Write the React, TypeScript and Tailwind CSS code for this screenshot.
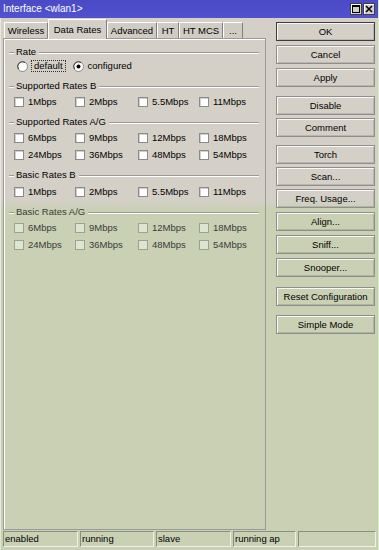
import React from "react";

const Check = ({ disabled }: { disabled?: boolean }) => (
  <span
    className={
      disabled
        ? "inline-block w-[10px] h-[10px] border border-[#9aa392] bg-[#dde4cf] shrink-0"
        : "inline-block w-[10px] h-[10px] border border-[#8a8a8a] bg-white shadow-[inset_1px_1px_0_#d0d0d0] shrink-0"
    }
  />
);

const Radio = ({ on }: { on?: boolean }) => (
  <svg width="11" height="11" viewBox="0 0 11 11" className="shrink-0">
    <circle cx="5.5" cy="5.5" r="5" fill="#fff" stroke="#8a8a8a" strokeWidth="1" />
    <path d="M1.6 8 A4.6 4.6 0 0 1 8 1.6" fill="none" stroke="#404040" strokeWidth="1" />
    {on && <circle cx="5.5" cy="5.5" r="2" fill="#000" />}
  </svg>
);

const GroupLabel = ({ text, mt, muted }: { text: string; mt: string; muted?: boolean }) => (
  <div className={`flex items-center h-[12px] ${mt}`}>
    <span className="w-[5px] border-t border-[#9a9a9a] shadow-[0_1px_0_#fff]" />
    <span className={`px-[2px] leading-none ${muted ? "text-[#3a3a3a]" : ""}`}>{text}</span>
    <span className="flex-1 ml-[1px] border-t border-[#9a9a9a] shadow-[0_1px_0_#fff]" />
  </div>
);

const Row = ({ items, mt, disabled }: { items: string[]; mt: string; disabled?: boolean }) => (
  <div className={`grid grid-cols-[61px_63px_61px_1fr] h-[14px] pl-[5px] ${mt}`}>
    {items.map((t) => (
      <div key={t} className="flex items-center gap-[4px]">
        <Check disabled={disabled} />
        <span className={`leading-none ${disabled ? "text-[#3a3a3a]" : ""}`}>{t}</span>
      </div>
    ))}
  </div>
);

const Btn = ({ label, mt, def }: { label: string; mt: string; def?: boolean }) => (
  <div
    className={`h-[19px] flex items-center justify-center leading-none border ${
      def ? "border-[#3c3c3c]" : "border-[#8e8e8e]"
    } shadow-[inset_1px_1px_0_rgba(255,255,255,0.85),inset_-1px_-1px_0_rgba(0,0,0,0.12)] ${mt}`}
  >
    {label}
  </div>
);

const Tab = ({ label, w, active }: { label: string; w: string; active?: boolean }) => (
  <div
    className={`${w} flex items-center justify-center leading-none border-l border-t border-r ${
      active
        ? "h-[20px] border-l-white border-t-white border-r-[#808080] bg-[#d4d0c8] -mb-[1px] z-10 relative"
        : "h-[16px] border-l-white border-t-white border-r-[#808080] bg-[#d0ccc4]"
    }`}
  >
    {label}
  </div>
);

export default function App() {
  return (
    <div className="w-[379px] h-[550px] flex flex-col font-['Liberation_Sans',Arial,sans-serif] text-[9.5px] text-black bg-[linear-gradient(to_bottom,#d4d0c8_0px,#d4d0c8_200px,#c9d0b4_210px,#c9d0b4_100%)] border-r border-[#d8ecc8] overflow-hidden">
      {/* title bar */}
      <div className="h-[18px] bg-[linear-gradient(to_bottom,#4a4ac6,#5252ce)] flex items-center justify-between pl-[3px] pr-[3px] shrink-0">
        <span className="text-white text-[10px] leading-none">Interface &lt;wlan1&gt;</span>
        <div className="flex gap-[1px]">
          <div className="w-[12px] h-[12px] bg-[#d4d0c8] border border-[#404040] shadow-[inset_1px_1px_0_#fff] flex items-center justify-center">
            <svg width="8" height="8" viewBox="0 0 8 8">
              <rect x="0.5" y="0.5" width="7" height="7" fill="none" stroke="#000" />
              <line x1="0" y1="1.5" x2="8" y2="1.5" stroke="#000" />
            </svg>
          </div>
          <div className="w-[12px] h-[12px] bg-[#d4d0c8] border border-[#404040] shadow-[inset_1px_1px_0_#fff] flex items-center justify-center">
            <svg width="8" height="8" viewBox="0 0 8 8">
              <path d="M1 1 L7 7 M7 1 L1 7" stroke="#000" strokeWidth="1.6" />
            </svg>
          </div>
        </div>
      </div>

      {/* body */}
      <div className="flex flex-1 pl-[2px] border-l border-[#e8e8e0]">
        {/* left */}
        <div className="w-[263px] flex flex-col">
          <div className="h-[20px] flex items-end pl-[1px]">
            <Tab label="Wireless" w="w-[44px]" />
            <Tab label="Data Rates" w="w-[59px]" active />
            <Tab label="Advanced" w="w-[50px]" />
            <Tab label="HT" w="w-[22px]" />
            <Tab label="HT MCS" w="w-[44px]" />
            <Tab label="..." w="w-[20px]" />
          </div>
          <div className="flex-1 border border-[#9a9a9a] shadow-[inset_1px_1px_0_#fff] pl-[5px] pr-[6px] pt-[7px]">
            <GroupLabel text="Rate" mt="mt-0" />
            <div className="h-[14px] mt-[1px] flex items-center pl-[8px]">
              <Radio />
              <span className="ml-[3px] px-[2px] h-[12px] flex items-center leading-none border border-dotted border-[#303030]">
                default
              </span>
              <span className="ml-[7px]"><Radio on /></span>
              <span className="ml-[4px] leading-none">configured</span>
            </div>
            <GroupLabel text="Supported Rates B" mt="mt-[7px]" />
            <Row items={["1Mbps", "2Mbps", "5.5Mbps", "11Mbps"]} mt="mt-[3px]" />
            <GroupLabel text="Supported Rates A/G" mt="mt-[7px]" />
            <Row items={["6Mbps", "9Mbps", "12Mbps", "18Mbps"]} mt="mt-[3px]" />
            <Row items={["24Mbps", "36Mbps", "48Mbps", "54Mbps"]} mt="mt-[3px]" />
            <GroupLabel text="Basic Rates B" mt="mt-[7px]" />
            <Row items={["1Mbps", "2Mbps", "5.5Mbps", "11Mbps"]} mt="mt-[4px]" />
            <GroupLabel text="Basic Rates A/G" mt="mt-[7px]" muted />
            <Row items={["6Mbps", "9Mbps", "12Mbps", "18Mbps"]} mt="mt-[3px]" disabled />
            <Row items={["24Mbps", "36Mbps", "48Mbps", "54Mbps"]} mt="mt-[3px]" disabled />
          </div>
        </div>
        {/* right buttons */}
        <div className="w-[99px] ml-[10px] flex flex-col pt-[4px]">
          <Btn label="OK" mt="mt-0" def />
          <Btn label="Cancel" mt="mt-[4px]" />
          <Btn label="Apply" mt="mt-[4px]" />
          <Btn label="Disable" mt="mt-[9px]" />
          <Btn label="Comment" mt="mt-[3px]" />
          <Btn label="Torch" mt="mt-[8px]" />
          <Btn label="Scan..." mt="mt-[3px]" />
          <Btn label="Freq. Usage..." mt="mt-[3px]" />
          <Btn label="Align..." mt="mt-[4px]" />
          <Btn label="Sniff..." mt="mt-[4px]" />
          <Btn label="Snooper..." mt="mt-[4px]" />
          <Btn label="Reset Configuration" mt="mt-[10px]" />
          <Btn label="Simple Mode" mt="mt-[9px]" />
        </div>
      </div>

      {/* status bar */}
      <div className="h-[20px] flex items-start gap-[2px] pt-[1px] pl-[2px] pr-[2px] border-l border-[#d8ecc8]">
        {[
          ["enabled", "w-[75px]"],
          ["running", "w-[74px]"],
          ["slave", "w-[75px]"],
          ["running ap", "w-[63px]"],
          ["", "flex-1"],
        ].map(([t, w], i) => (
          <div
            key={i}
            className={`${w} h-[16px] flex items-center pl-[1px] leading-none border border-t-[#8a9080] border-l-[#8a9080] border-b-[#eef2e6] border-r-[#eef2e6]`}
          >
            {t}
          </div>
        ))}
      </div>
    </div>
  );
}
